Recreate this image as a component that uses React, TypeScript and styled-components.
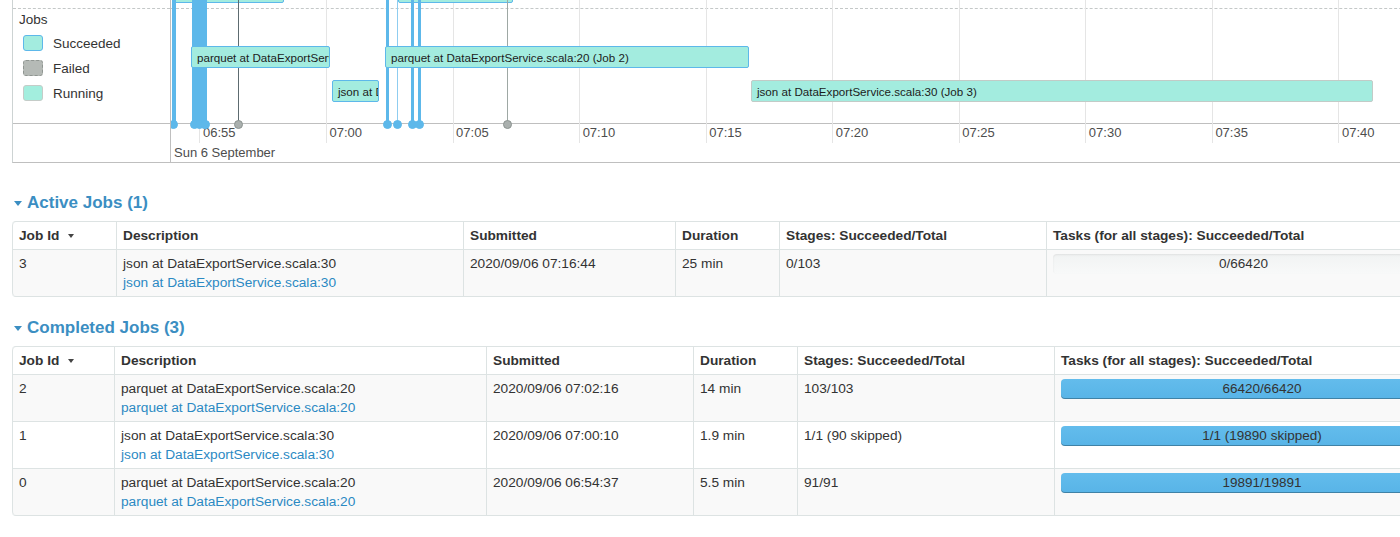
import React from "react";
import styled, { createGlobalStyle, css } from "styled-components";

const GlobalStyle = createGlobalStyle`
  html, body { margin: 0; padding: 0; overflow: hidden; background: #fff; }
  body { font-family: "Liberation Sans", Arial, sans-serif; color: #333; }
  #root { width: 1520px; }
`;

const BLUE = "#5db8ea";
const TEAL = "#a3ecdf";
const GRID = "#e5e5e5";
const FRAME = "#bfbfbf";
const TBORDER = "#dde3e3";

const Page = styled.div`
  padding-left: 12px;
  width: 1500px;
`;

/* ---------- Timeline ---------- */
const Timeline = styled.div`
  display: flex;
  height: 163px;
  box-sizing: border-box;
  border-left: 1px solid #cdd3d3;
  border-bottom: 1px solid ${FRAME};
`;

const LabelPanel = styled.div`
  width: 158px;
  flex: none;
  box-sizing: border-box;
  border-right: 1px solid ${FRAME};
  display: flex;
  flex-direction: column;
`;

const TopStrip = styled.div`
  height: 9px;
  flex: none;
  box-sizing: border-box;
  border-bottom: 1px dashed #c4c8c8;
`;

const Band = styled.div`
  height: 115px;
  flex: none;
  box-sizing: border-box;
  border-bottom: 1px solid ${FRAME};
`;

const LabelBand = styled(Band)`
  padding: 3px 0 0 6px;
`;

const AxisBand = styled.div`
  flex: 1;
`;

const GroupTitle = styled.div`
  font-size: 13.5px;
  line-height: 16px;
  color: #333;
`;

const Legend = styled.div`
  margin: 2.5px 0 0 4px;
  display: flex;
  flex-direction: column;
`;

const LegendRow = styled.div`
  height: 25px;
  display: flex;
  align-items: center;
  gap: 10px;
  font-size: 13.5px;
  color: #333;
`;

type Status = "succeeded" | "failed" | "running";

const Swatch = styled.span<{ $status: Status }>`
  width: 20px;
  height: 16px;
  box-sizing: border-box;
  border-radius: 3px;
  ${(p) =>
    p.$status === "succeeded"
      ? css`background: ${TEAL}; border: 1.5px solid ${BLUE};`
      : p.$status === "failed"
      ? css`background: #b5bab6; border: 1px dashed #8f9591;`
      : css`background: #a3eede; border: 1px solid #c5ccc8;`}
`;

const Canvas = styled.div`
  flex: 1;
  position: relative;
  overflow: hidden;
  display: flex;
  flex-direction: column;
`;

const GridLine = styled.div`
  position: absolute;
  top: 0;
  width: 1px;
  height: 143px;
  background: ${GRID};
  z-index: 0;
`;

const AxisLabel = styled.div`
  position: absolute;
  top: 124.5px;
  font-size: 13px;
  line-height: 16px;
  color: #4d4d4d;
  white-space: nowrap;
`;

const DateLabel = styled(AxisLabel)`
  top: 144.5px;
  left: 3px;
`;

const ConnLine = styled.div<{ $tone: "blue" | "light" | "dark" | "gray" }>`
  position: absolute;
  top: 0;
  height: 123px;
  z-index: 2;
  background: ${(p) =>
    p.$tone === "blue"
      ? BLUE
      : p.$tone === "light"
      ? "#8fcdf0"
      : p.$tone === "dark"
      ? "#5d6b70"
      : "#9ea8a4"};
`;

const Dot = styled.div<{ $gray?: boolean }>`
  position: absolute;
  top: 119.5px;
  width: 9px;
  height: 9px;
  margin-left: -4.5px;
  border-radius: 50%;
  box-sizing: border-box;
  z-index: 3;
  background: ${(p) => (p.$gray ? "#aab0ae" : BLUE)};
  border: 1px solid ${(p) => (p.$gray ? "#8c9491" : BLUE)};
`;

const JobBox = styled.div<{ $running?: boolean; $layer: number }>`
  position: absolute;
  height: 22px;
  box-sizing: border-box;
  border-radius: 2px;
  background: ${TEAL};
  border: 1px solid ${(p) => (p.$running ? "#c2cbc7" : BLUE)};
  z-index: ${(p) => p.$layer};
  overflow: hidden;
  white-space: nowrap;
  font-size: 11.6px;
  line-height: 21px;
  color: #1c1c1c;
  padding: 0 5px;
`;

/* ---------- Tables ---------- */
const Section = styled.section<{ $top: number }>`
  margin-top: ${(p) => p.$top}px;
`;

const SectionTitle = styled.h4`
  margin: 0 0 8px;
  padding: 1px 0 0 2px;
  display: flex;
  align-items: center;
  gap: 5px;
  font-size: 17px;
  line-height: 20px;
  font-weight: bold;
  color: #3b8ec2;
`;

const CollapseArrow = styled.span`
  width: 0;
  height: 0;
  border-left: 4px solid transparent;
  border-right: 4px solid transparent;
  border-top: 5px solid currentColor;
  margin-top: 1px;
`;

const Table = styled.table<{ $width: number }>`
  width: ${(p) => p.$width}px;
  table-layout: fixed;
  border-collapse: separate;
  border-spacing: 0;
  border: 1px solid ${TBORDER};
  border-left: 0;
  border-radius: 4px;
  font-size: 13.7px;
  color: #333;
`;

const Col = styled.col<{ $w: number }>`
  width: ${(p) => p.$w}px;
`;

const Th = styled.th`
  text-align: left;
  font-weight: bold;
  padding: 5px 6px;
  line-height: 17px;
  border-left: 1px solid ${TBORDER};
  white-space: nowrap;
  overflow: hidden;
  &:first-child { border-top-left-radius: 4px; }
`;

const SortArrow = styled.span`
  display: inline-block;
  width: 0;
  height: 0;
  margin-left: 9px;
  vertical-align: middle;
  border-left: 3px solid transparent;
  border-right: 3px solid transparent;
  border-top: 4px solid #444;
`;

const Row = styled.tr`
  &:nth-child(odd) td { background: #f9f9f9; }
  &:last-child td:first-child { border-bottom-left-radius: 4px; }
`;

const Td = styled.td`
  padding: 4px 6px;
  line-height: 19px;
  vertical-align: top;
  border-left: 1px solid ${TBORDER};
  border-top: 1px solid ${TBORDER};
  white-space: nowrap;
  overflow: hidden;
`;

const DescLink = styled.a`
  display: block;
  color: #2b89c3;
  text-decoration: none;
`;

const Progress = styled.div<{ $done: boolean }>`
  height: 20px;
  border-radius: 4px;
  text-align: center;
  line-height: 20px;
  font-size: 13.5px;
  color: #333;
  ${(p) =>
    p.$done
      ? css`
          background: linear-gradient(#63bcec, #58b4e7);
          box-shadow: inset 0 -1px 0 rgba(0, 0, 0, 0.28);
        `
      : css`
          background: linear-gradient(#f1f3f3, #f8f9f9);
          box-shadow: inset 0 1px 2px rgba(0, 0, 0, 0.08);
        `}
`;

/* ---------- Data ---------- */
const gridTimes = ["06:55", "07:00", "07:05", "07:10", "07:15", "07:20", "07:25", "07:30", "07:35", "07:40"];
const gridX = (i: number) => 28.4 + i * 126.55;

const lines: { x: number; w: number; tone: "blue" | "light" | "dark" | "gray" }[] = [
  { x: 0.5, w: 4, tone: "blue" },
  { x: 21, w: 15, tone: "blue" },
  { x: 66.5, w: 1.2, tone: "dark" },
  { x: 215, w: 3, tone: "blue" },
  { x: 225.5, w: 1.5, tone: "light" },
  { x: 240, w: 3, tone: "blue" },
  { x: 247, w: 3, tone: "blue" },
  { x: 335.5, w: 1.5, tone: "gray" },
];

const dots: { x: number; gray?: boolean }[] = [
  { x: 2.5 },
  { x: 23 },
  { x: 28 },
  { x: 33 },
  { x: 34 },
  { x: 67, gray: true },
  { x: 216.5 },
  { x: 226.5 },
  { x: 241.5 },
  { x: 248.5 },
  { x: 336, gray: true },
];

const boxes: { x: number; w: number; top: number; text: string; running?: boolean; layer: number }[] = [
  { x: 1, w: 112, top: -19, text: "", layer: 1 },
  { x: 227, w: 115, top: -19, text: "", layer: 1 },
  { x: 20, w: 139, top: 46, text: "parquet at DataExportService.scala:20 (Job 0)", layer: 4 },
  { x: 161, w: 47, top: 80, text: "json at DataExportService.scala:30 (Job 1)", layer: 4 },
  { x: 214, w: 364, top: 46, text: "parquet at DataExportService.scala:20 (Job 2)", layer: 4 },
  { x: 580, w: 622, top: 80, text: "json at DataExportService.scala:30 (Job 3)", running: true, layer: 4 },
];

type Job = {
  id: number;
  desc: string;
  submitted: string;
  duration: string;
  stages: string;
  tasks: string;
  done: boolean;
};

const activeJobs: Job[] = [
  {
    id: 3,
    desc: "json at DataExportService.scala:30",
    submitted: "2020/09/06 07:16:44",
    duration: "25 min",
    stages: "0/103",
    tasks: "0/66420",
    done: false,
  },
];

const completedJobs: Job[] = [
  {
    id: 2,
    desc: "parquet at DataExportService.scala:20",
    submitted: "2020/09/06 07:02:16",
    duration: "14 min",
    stages: "103/103",
    tasks: "66420/66420",
    done: true,
  },
  {
    id: 1,
    desc: "json at DataExportService.scala:30",
    submitted: "2020/09/06 07:00:10",
    duration: "1.9 min",
    stages: "1/1 (90 skipped)",
    tasks: "1/1 (19890 skipped)",
    done: true,
  },
  {
    id: 0,
    desc: "parquet at DataExportService.scala:20",
    submitted: "2020/09/06 06:54:37",
    duration: "5.5 min",
    stages: "91/91",
    tasks: "19891/19891",
    done: true,
  },
];

const headers = [
  "Job Id",
  "Description",
  "Submitted",
  "Duration",
  "Stages: Succeeded/Total",
  "Tasks (for all stages): Succeeded/Total",
];

function JobsTable({ jobs, cols }: { jobs: Job[]; cols: number[] }) {
  const total = cols.reduce((a, b) => a + b, 0) + 1;
  return (
    <Table $width={total}>
      <colgroup>
        {cols.map((w, i) => (
          <Col key={i} $w={w} />
        ))}
      </colgroup>
      <thead>
        <tr>
          {headers.map((h, i) => (
            <Th key={h}>
              {h}
              {i === 0 && <SortArrow />}
            </Th>
          ))}
        </tr>
      </thead>
      <tbody>
        {jobs.map((j) => (
          <Row key={j.id}>
            <Td>{j.id}</Td>
            <Td>
              {j.desc}
              <DescLink href="#">{j.desc}</DescLink>
            </Td>
            <Td>{j.submitted}</Td>
            <Td>{j.duration}</Td>
            <Td>{j.stages}</Td>
            <Td>
              <Progress $done={j.done}>{j.tasks}</Progress>
            </Td>
          </Row>
        ))}
      </tbody>
    </Table>
  );
}

export default function App() {
  return (
    <>
      <GlobalStyle />
      <Page>
        <Timeline>
          <LabelPanel>
            <TopStrip />
            <LabelBand>
              <GroupTitle>Jobs</GroupTitle>
              <Legend>
                <LegendRow>
                  <Swatch $status="succeeded" />
                  Succeeded
                </LegendRow>
                <LegendRow>
                  <Swatch $status="failed" />
                  Failed
                </LegendRow>
                <LegendRow>
                  <Swatch $status="running" />
                  Running
                </LegendRow>
              </Legend>
            </LabelBand>
            <AxisBand />
          </LabelPanel>
          <Canvas>
            <TopStrip />
            <Band />
            <AxisBand />
            {gridTimes.map((t, i) => (
              <GridLine key={"g" + t} style={{ left: gridX(i) }} />
            ))}
            {gridTimes.map((t, i) => (
              <AxisLabel key={"l" + t} style={{ left: gridX(i) + 3.6 }}>
                {t}
              </AxisLabel>
            ))}
            <DateLabel>Sun 6 September</DateLabel>
            {boxes
              .filter((b) => b.layer === 1)
              .map((b, i) => (
                <JobBox key={"t" + i} $layer={1} style={{ left: b.x, width: b.w, top: b.top }}>
                  {b.text}
                </JobBox>
              ))}
            {lines.map((l, i) => (
              <ConnLine key={"c" + i} $tone={l.tone} style={{ left: l.x, width: l.w }} />
            ))}
            {dots.map((d, i) => (
              <Dot key={"d" + i} $gray={d.gray} style={{ left: d.x }} />
            ))}
            {boxes
              .filter((b) => b.layer === 4)
              .map((b, i) => (
                <JobBox
                  key={"b" + i}
                  $layer={4}
                  $running={b.running}
                  style={{ left: b.x, width: b.w, top: b.top }}
                >
                  {b.text}
                </JobBox>
              ))}
          </Canvas>
        </Timeline>

        <Section $top={29}>
          <SectionTitle>
            <CollapseArrow />
            Active Jobs (1)
          </SectionTitle>
          <JobsTable jobs={activeJobs} cols={[104, 347, 212, 104, 267, 394]} />
        </Section>

        <Section $top={20}>
          <SectionTitle>
            <CollapseArrow />
            Completed Jobs (3)
          </SectionTitle>
          <JobsTable jobs={completedJobs} cols={[102, 372, 207, 104, 257, 415]} />
        </Section>
      </Page>
    </>
  );
}
